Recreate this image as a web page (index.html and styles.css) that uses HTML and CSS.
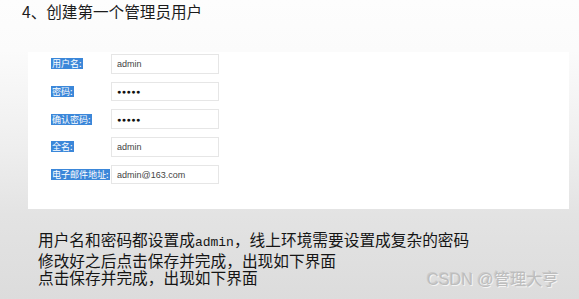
FILE: index.html
```html
<!DOCTYPE html>
<html lang="zh-CN">
<head>
<meta charset="utf-8">
<link rel="stylesheet" href="styles.css">
</head>
<body>
<div class="page">
  <h1 class="title">4、创建第一个管理员用户</h1>
  <div class="shot">
    <div class="form">
      <div class="row"><span class="label">用户名:</span><span class="input">admin</span></div>
      <div class="row"><span class="label">密码:</span><span class="input dots">●●●●●</span></div>
      <div class="row"><span class="label">确认密码:</span><span class="input dots">●●●●●</span></div>
      <div class="row"><span class="label">全名:</span><span class="input">admin</span></div>
      <div class="row"><span class="label">电子邮件地址:</span><span class="input">admin@163.com</span></div>
    </div>
  </div>
  <div class="notes">
    <p>用户名和密码都设置成<span class="latin">admin</span>，线上环境需要设置成复杂的密码</p>
    <p>修改好之后点击保存并完成，出现如下界面</p>
    <p>点击保存并完成，出现如下界面</p>
  </div>
  <div class="watermark">CSDN @管理大亨</div>
</div>
</body>
</html>
```

FILE: styles.css
```css
html, body {
  margin: 0;
  padding: 0;
}
body {
  width: 579px;
  height: 299px;
  overflow: hidden;
  font-family: "Noto Sans CJK SC", "Liberation Serif", serif;
}
.page {
  position: relative;
  width: 579px;
  height: 299px;
  background: linear-gradient(to bottom, #fdfdfd 0px, #fbfbfb 50px, #eeeeee 150px, #e3e3e3 215px, #dcdcdc 299px);
  display: flex;
  flex-direction: column;
}
.title {
  margin: 0;
  padding: 3px 0 0 22px;
  height: 49px;
  box-sizing: border-box;
  font-size: 15.6px;
  line-height: 17px;
  font-weight: 400;
  color: #1c1c1c;
}
.shot {
  margin-left: 28px;
  width: 541px;
  height: 157px;
  margin-top: 3px;
  background: #ffffff;
  box-sizing: border-box;
  padding: 2px 0 0 23px;
}
.form {
  display: flex;
  flex-direction: column;
  gap: 8px;
}
.row {
  display: flex;
  align-items: center;
  justify-content: space-between;
  width: 168px;
  height: 19.7px;
}
.label {
  flex: none;
  background: #3b87d9;
  color: #ffffff;
  font-size: 9px;
  line-height: 11px;
  height: 11px;
  padding: 0 1px;
  white-space: nowrap;
}
.input {
  flex: none;
  width: 108px;
  height: 19.7px;
  box-sizing: border-box;
  border: 1px solid #e6e6e6;
  background: #ffffff;
  font-family: "Liberation Sans", sans-serif;
  font-size: 9px;
  color: #444444;
  display: flex;
  align-items: center;
  padding-left: 5px;
}
.dots {
  color: #111111;
  font-size: 7px;
  letter-spacing: 0.5px;
}
.notes {
  padding: 22px 0 0 38px;
  color: #151515;
  font-size: 15.7px;
  line-height: 17.5px;
}
.notes p {
  margin: 0;
}
.latin {
  font-family: "Liberation Mono", monospace;
  font-size: 13px;
}
.watermark {
  position: absolute;
  left: 427px;
  top: 271px;
  font-family: "Liberation Sans", "Noto Sans CJK SC", sans-serif;
  font-size: 16.2px;
  line-height: 17px;
  color: #bdbdbd;
  text-shadow: 1px 1px 0 #f4f4f4, -1px -1px 0 #cccccc;
}
```
